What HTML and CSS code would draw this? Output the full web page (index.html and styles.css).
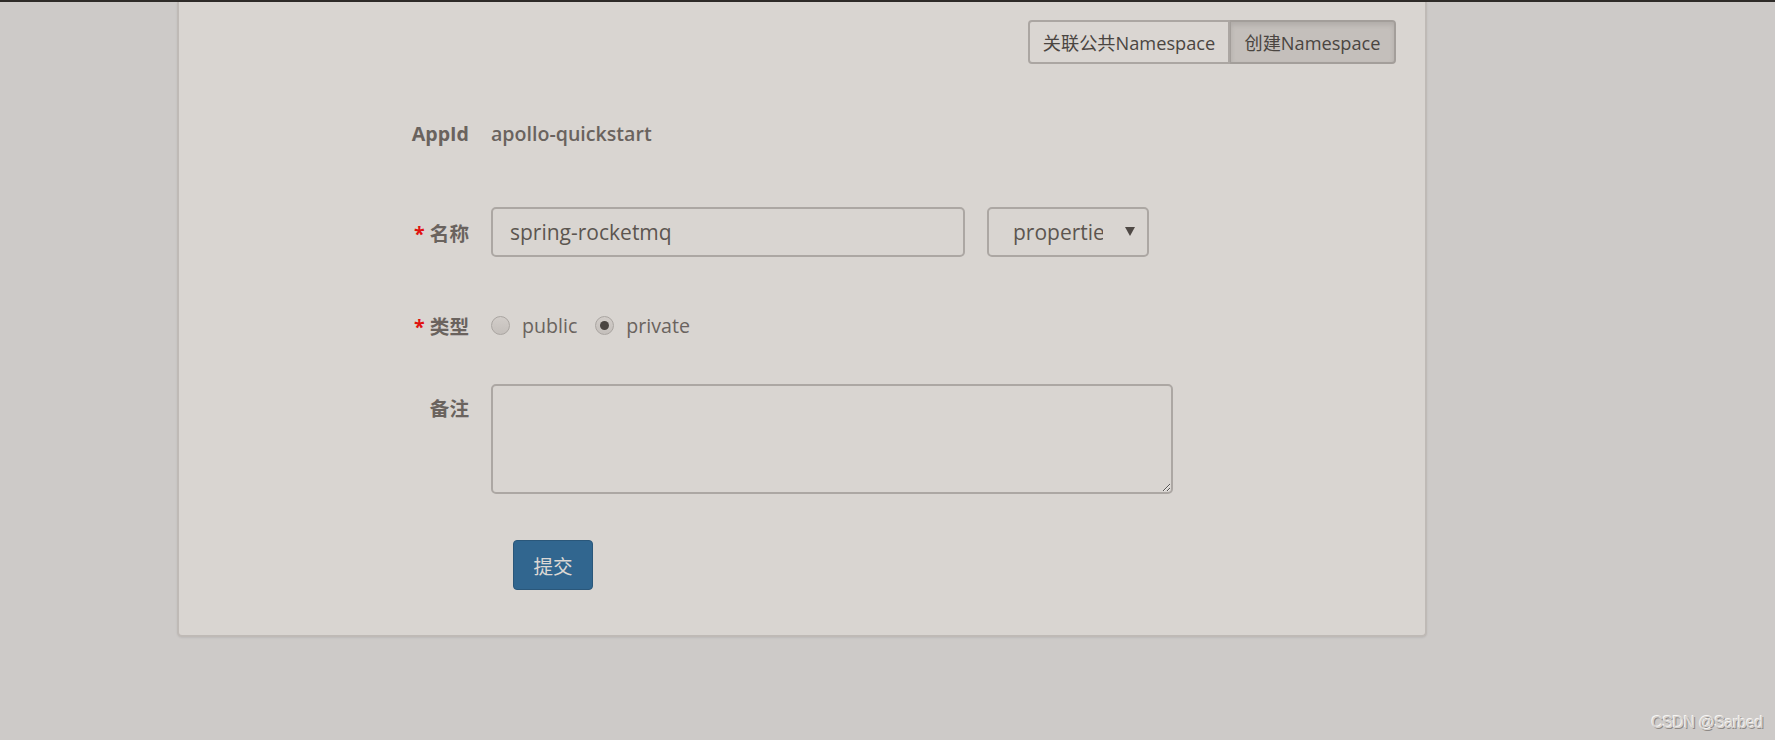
FILE: index.html
```html
<!DOCTYPE html>
<html lang="zh-CN">
<head>
<meta charset="utf-8">
<title>创建Namespace</title>
<link rel="stylesheet" href="styles.css">
</head>
<body>
<div class="topbar"></div>
<main class="page">
  <section class="panel">
    <div class="panel-head">
      <div class="btn-group">
        <button type="button" class="btn">关联公共Namespace</button>
        <button type="button" class="btn btn-active">创建Namespace</button>
      </div>
    </div>
    <form class="form">
      <div class="row row-appid">
        <label class="label">AppId</label>
        <div class="static">apollo-quickstart</div>
      </div>
      <div class="row row-name">
        <label class="label"><span class="req">*</span> 名称</label>
        <div class="controls">
          <input class="input input-name" type="text" value="spring-rocketmq">
          <div class="select" role="combobox" aria-expanded="false">
            <span class="select-value">properties</span>
            <span class="select-arrow"></span>
          </div>
        </div>
      </div>
      <div class="row row-type">
        <label class="label"><span class="req">*</span> 类型</label>
        <div class="controls radios">
          <label class="radio"><input type="radio" name="type" value="public"> public</label>
          <label class="radio"><input type="radio" name="type" value="private" checked> private</label>
        </div>
      </div>
      <div class="row row-comment">
        <label class="label label-top">备注</label>
        <textarea class="textarea"></textarea>
      </div>
      <div class="row row-submit">
        <button type="button" class="btn-submit">提交</button>
      </div>
    </form>
  </section>
</main>
<div class="watermark">CSDN @Sarbed</div>
</body>
</html>
```
FILE: styles.css
```css
* { box-sizing: border-box; }

html, body {
  margin: 0;
  padding: 0;
}

body {
  background: #cdcac8;
  font-family: "Open Sans", "Noto Sans CJK SC", sans-serif;
  color: #6a635e;
  height: 740px;
  overflow: hidden;
  position: relative;
}

.topbar {
  height: 2px;
  background: #2e2b28;
}

.page {
  padding-left: 177px;
}

.panel {
  width: 1250px;
  height: 635px;
  background: #d9d5d1;
  border: 2px solid #bfbab6;
  border-top: none;
  border-radius: 0 0 5px 5px;
  box-shadow: 0 1px 2px rgba(0, 0, 0, 0.08);
  display: flex;
  flex-direction: column;
}

.panel-head {
  display: flex;
  justify-content: flex-end;
  padding: 18px 29px 0 0;
}

.btn-group {
  display: flex;
  height: 44px;
}

.btn {
  font-family: "Open Sans", "Noto Sans CJK SC", sans-serif;
  font-size: 18.2px;
  color: #4a4541;
  background: #dad6d2;
  border: 2px solid #aba6a2;
  height: 44px;
  padding: 0;
  margin: 0;
  cursor: pointer;
  white-space: nowrap;
}

.btn:first-child {
  border-radius: 4px 0 0 4px;
  width: 202px;
}

.btn-active {
  background: #c4bfbb;
  border-color: #a39e9a;
  border-left-width: 1px;
  border-radius: 0 4px 4px 0;
  width: 166px;
  box-shadow: inset 0 3px 5px rgba(0, 0, 0, 0.1);
}

.form {
  display: flex;
  flex-direction: column;
  padding-top: 45px;
}

.row {
  display: flex;
  align-items: center;
}

.label {
  width: 290px;
  text-align: right;
  font-weight: 700;
  font-size: 19.6px;
  color: #6a635e;
  margin-right: 22px;
}

.label-top {
  align-self: flex-start;
  padding-top: 9px;
}

.req {
  color: #e0120f;
  font-weight: 700;
}

.row-appid {
  height: 48px;
  margin-bottom: 50px;
}

.static {
  font-size: 19.6px;
  font-weight: 600;
  color: #6a635e;
}

.row-name {
  height: 50px;
  margin-bottom: 44px;
}

.controls {
  display: flex;
  align-items: center;
}

.input {
  font-family: "Open Sans", "Noto Sans CJK SC", sans-serif;
  font-size: 21px;
  color: #5c5550;
  background: #d9d5d1;
  border: 2px solid #aca7a3;
  border-radius: 5px;
  height: 50px;
  padding: 0 17px;
  outline: none;
}

.input-name {
  width: 474px;
  margin-right: 22px;
}

.select {
  display: flex;
  align-items: center;
  justify-content: space-between;
  font-size: 21px;
  color: #5c5550;
  background: #d9d5d1;
  border: 2px solid #aca7a3;
  border-radius: 5px;
  height: 50px;
  width: 162px;
  padding: 0 12px 0 24px;
  cursor: pointer;
}

.select-value {
  width: 90px;
  overflow: hidden;
  white-space: nowrap;
}

.select-arrow {
  width: 0;
  height: 0;
  border-left: 5px solid transparent;
  border-right: 5px solid transparent;
  border-top: 9px solid #4f4945;
  margin-top: -2px;
}

.row-type {
  height: 48px;
  margin-bottom: 35px;
}

.radios {
  font-size: 19.6px;
  color: #6a635e;
}

.radio {
  display: inline-flex;
  align-items: center;
  margin-right: 18px;
}

.radio input {
  appearance: none;
  -webkit-appearance: none;
  width: 19px;
  height: 19px;
  margin: 0 12px 0 0;
  border: 1px solid #aaa5a1;
  border-radius: 50%;
  background: linear-gradient(#d2cdc9, #c4bfbb);
  position: relative;
}

.radio input:checked::after {
  content: "";
  position: absolute;
  left: 4px;
  top: 4px;
  width: 9px;
  height: 9px;
  border-radius: 50%;
  background: #4a4541;
}

.row-comment {
  align-items: flex-start;
  height: 110px;
  margin-bottom: 46px;
}

.textarea {
  width: 682px;
  height: 110px;
  background: #d9d5d1;
  border: 2px solid #aca7a3;
  border-radius: 5px;
  outline: none;
  resize: both;
  font-family: "Open Sans", sans-serif;
  font-size: 19.6px;
}

.row-submit {
  padding-left: 334px;
}

.btn-submit {
  font-family: "Open Sans", "Noto Sans CJK SC", sans-serif;
  font-size: 19.6px;
  color: #dcd8d4;
  background: #31668f;
  border: 1px solid #2a577a;
  border-radius: 4px;
  width: 80px;
  height: 50px;
  padding: 0;
  cursor: pointer;
}

.watermark {
  position: absolute;
  right: 12px;
  bottom: 8px;
  font-family: "Liberation Sans", sans-serif;
  font-size: 16px;
  color: #d6d3d0;
  text-shadow: -1px -1px 0 #f6f4f2, 1px 1px 0 #8e8986;
  letter-spacing: -0.5px;
}
```
